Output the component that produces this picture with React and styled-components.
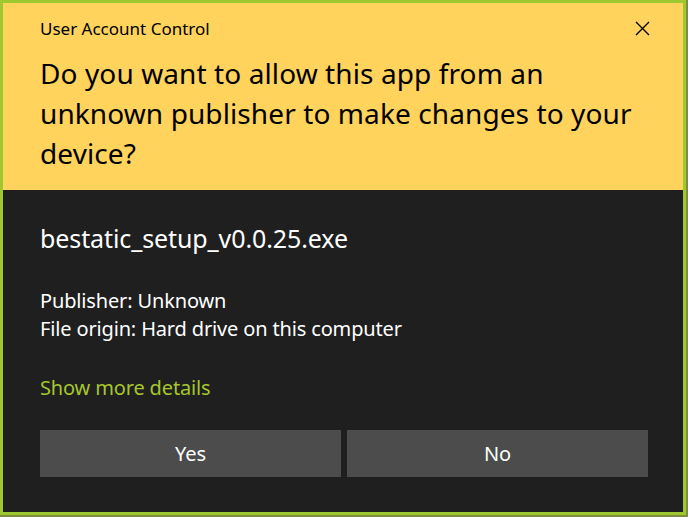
import styled, { createGlobalStyle } from "styled-components";

const Global = createGlobalStyle`
  html, body {
    margin: 0;
    padding: 0;
    background: #7d8f3c;
  }
  body {
    font-family: "Noto Sans", "Open Sans", sans-serif;
  }
`;

const Window = styled.div`
  width: 680px;
  height: 509px;
  border: 3px solid #9fc72f;
  background: #1f1f1f;
  display: flex;
  flex-direction: column;
`;

const Header = styled.div`
  background: #ffd35c;
  color: #000;
  height: 187px;
  padding: 0 35px 0 37px;
  display: flex;
  flex-direction: column;
`;

const TitleBar = styled.div`
  display: flex;
  justify-content: space-between;
  align-items: center;
  height: 50px;
`;

const Caption = styled.span`
  font-size: 17px;
`;

const Close = styled.button`
  border: 0;
  background: none;
  padding: 0;
  margin-right: -6px;
  width: 24px;
  height: 24px;
  display: flex;
  align-items: center;
  justify-content: center;
`;

const Question = styled.h1`
  margin: 0;
  font-size: 28px;
  font-weight: 400;
  line-height: 40px;
  letter-spacing: 0.1px;
`;

const Body = styled.div`
  flex: 1;
  padding: 32px 35px 0 37px;
  color: #fff;
  display: flex;
  flex-direction: column;
`;

const FileName = styled.div`
  font-size: 25px;
  line-height: 32px;
  letter-spacing: -0.1px;
`;

const Details = styled.div`
  margin-top: 33px;
  font-size: 20px;
  line-height: 28px;
  letter-spacing: -0.15px;
`;

const MoreLink = styled.a`
  margin-top: 31px;
  color: #a6c72d;
  font-size: 20px;
  line-height: 28px;
  letter-spacing: -0.15px;
  cursor: pointer;
`;

const Buttons = styled.div`
  margin-top: 28px;
  display: grid;
  grid-template-columns: 301px 301px;
  gap: 6px;
`;

const Button = styled.button`
  height: 47px;
  border: 0;
  background: #4c4c4c;
  color: #fff;
  font-family: inherit;
  font-size: 20px;
  letter-spacing: -0.1px;
`;

export default function App() {
  return (
    <>
      <Global />
      <Window>
        <Header>
          <TitleBar>
            <Caption>User Account Control</Caption>
            <Close aria-label="Close">
              <svg width="15" height="15" viewBox="0 0 15 15">
                <path d="M1 1L14 14M14 1L1 14" stroke="#000" strokeWidth="1.4" />
              </svg>
            </Close>
          </TitleBar>
          <Question>
            Do you want to allow this app from an
            <br />
            unknown publisher to make changes to your
            <br />
            device?
          </Question>
        </Header>
        <Body>
          <FileName>bestatic_setup_v0.0.25.exe</FileName>
          <Details>
            Publisher: Unknown
            <br />
            File origin: Hard drive on this computer
          </Details>
          <MoreLink>Show more details</MoreLink>
          <Buttons>
            <Button>Yes</Button>
            <Button>No</Button>
          </Buttons>
        </Body>
      </Window>
    </>
  );
}
